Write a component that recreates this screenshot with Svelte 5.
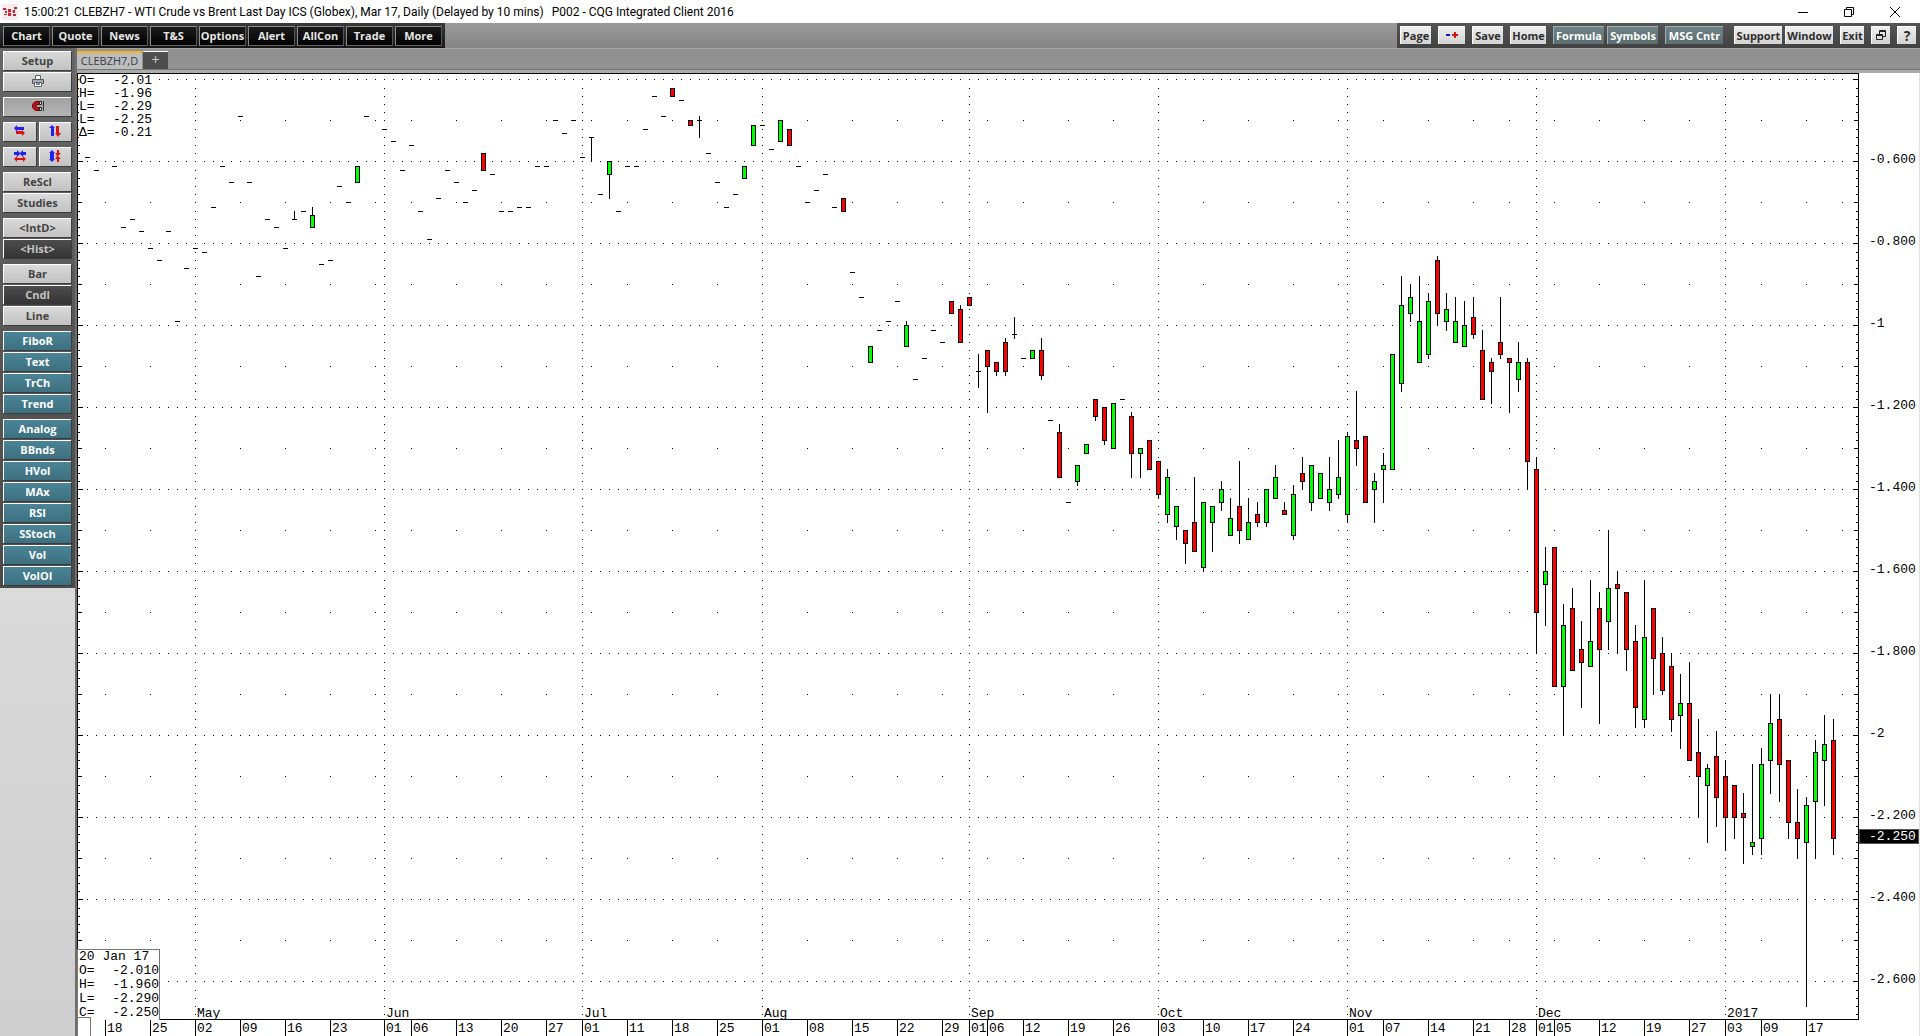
<script>
  const leftButtons = ['Chart', 'Quote', 'News', 'T&S', 'Options', 'Alert', 'AllCon', 'Trade', 'More'];
  const sideGroups = [
    { tone: 'light', items: ['ReScl', 'Studies'] },
    { tone: 'light', items: ['<IntD>', '<Hist>'], on: '<Hist>' },
    { tone: 'light', items: ['Bar', 'Cndl', 'Line'], on: 'Cndl' },
    { tone: 'teal', items: ['FiboR', 'Text', 'TrCh', 'Trend'] },
    { tone: 'teal', items: ['Analog', 'BBnds', 'HVol', 'MAx', 'RSI', 'SStoch', 'Vol', 'VolOI'] }
  ];
  const quote = [['O=', '-2.01'], ['H=', '-1.96'], ['L=', '-2.29'], ['L=', '-2.25'], ['Δ=', '-0.21']];
  const cursor = [['O=', '-2.010'], ['H=', '-1.960'], ['L=', '-2.290'], ['C=', '-2.250']];

  // Sessions in order, prices in negative cents. A lone number is a session
  // with one price; otherwise: kind (g up, r down, d doji), top, bottom, high, low.
  const raw = `59 62 - 61 76 74 77 81 84 77 99 86 81 82 71 61 65 49 65 88 74 76 81 d,74,74,72,74 72
g,73,76,71,76 85 84 66 70 g,61,65 49 - 52 55 62 56 72 79 69 62 65 70 67 r,58,62 63 72 72 71 71 61 61 50 53 50
59 d,54,54,54,60 68 g,60,63,60,69 72 61 61 52 44 49 r,42,44 45 r,50,51 d,50,50,49,54 58 65 71 68 g,61,64 g,51,56
51 57 g,50,55 r,52,56 61 70 67 63 71 r,69,72 87 93 g,105,109 101 99 94 g,100,105,99,105 113 108 101 104 r,94,97
r,96,104,95,104 r,93,95 d,111,111,107,115 r,106,110,106,121 r,109,111,109,112 r,104,111,103,112 d,102,102,98,103
108 g,106,108 r,106,112,103,113 123 r,126,137,124,137 143 g,134,138,134,139 g,129,131 r,118,122,118,123
r,120,128,120,129 g,119,130 118 r,122,131,121,137 g,130,131,130,137 r,128,135 r,133,141,133,142 g,137,146,135,148
g,144,149,144,152 r,150,153,150,158 r,148,155,137,155 g,143,159,143,160 g,144,148,144,155 g,140,143,138,145
g,147,151,142,151 r,144,150,133,153 g,148,152,142,152 r,146,148,143,149 g,140,148,140,149 g,137,142,134,142
r,145,146,143,146 g,141,151,139,152 r,136,138,132,140 g,134,143,134,145 g,136,142 g,140,143,132,145 g,137,141,128,142
g,127,146,126,148 r,128,130,116,134 r,127,143 g,138,140,136,148 g,134,135,131,143 g,107,135 g,95,114,88,116
g,93,97,90,99 g,99,109,88,109 g,94,107,92,108 r,84,97,83,100 g,96,99,92,101 g,99,104,93,104 g,100,105,94,105
r,98,102,93,103 r,106,118,101,118 r,109,111,108,119 r,104,107,93,108 r,108,109,108,121 g,109,113,104,116
r,109,133,108,140 r,135,170,132,180 g,160,163,154,173 r,154,188 g,173,188,168,200 r,169,184,164,184
r,179,182,172,193 g,177,183,162,183 r,169,179,165,197 g,164,172,150,179 r,163,164,160,180 r,165,179,165,184
r,177,193,173,198 g,176,196,162,198 r,169,181,169,190 r,180,189,176,190 r,183,196,180,199 g,192,195,185,203
r,192,206,182,206 r,204,210,196,220 g,208,212,207,226 r,205,215,199,222 r,210,220,206,228 r,212,220,212,225
r,219,220,214,231 g,226,227,207,229 g,207,225,203,229 g,197,206,190,214 r,196,207,190,216 r,206,221,206,225
r,221,225,213,230 g,217,226,215,266 g,204,216,201,230 g,202,206,195,217 r,201,225,196,229`;

  const bars = raw.split(/\s+/).map((s, i) => {
    if (s === '-') return null;
    const p = s.split(',');
    if (p.length === 1) return { i, kind: 'd', top: +s, bottom: +s, high: +s, low: +s };
    const [kind, top, bottom, high = top, low = bottom] = p;
    return { i, kind, top: +top, bottom: +bottom, high: +high, low: +low };
  }).filter(Boolean);

  const months = [[12, 'May'], [33, 'Jun'], [55, 'Jul'], [75, 'Aug'], [98, 'Sep'], [119, 'Oct'], [140, 'Nov'], [161, 'Dec'], [182, '2017']];
  const days = [[2, '18'], [7, '25'], [12, '02'], [17, '09'], [22, '16'], [27, '23'], [33, '01'], [36, '06'], [41, '13'], [46, '20'], [51, '27'], [55, '01'], [60, '11'], [65, '18'], [70, '25'], [75, '01'], [80, '08'], [85, '15'], [90, '22'], [95, '29'], [98, '01'], [100, '06'], [104, '12'], [109, '19'], [114, '26'], [119, '03'], [124, '10'], [129, '17'], [134, '24'], [140, '01'], [144, '07'], [149, '14'], [154, '21'], [158, '28'], [161, '01'], [163, '05'], [168, '12'], [173, '19'], [178, '27'], [182, '03'], [186, '09'], [191, '17']];
  const weeks = [2, 7, 17, 22, 27, 32, 36, 41, 46, 51, 56, 60, 65, 70, 80, 85, 90, 95, 100, 104, 109, 114, 124, 129, 134, 139, 144, 149, 154, 158, 163, 168, 173, 178, 186, 191, 195];
  const SLOTS = 196;

  let width = $state(1842);
  let height = $state(963);

  const axisX = $derived(width - 61);
  const axisY = $derived(height - 17);
  const step = $derived(Math.max(2, Math.floor(axisX / 197)));
  const unit = $derived(Math.max(1, Math.round(axisY / 23.07) / 10));

  const x = (i) => 10 + i * step;
  const y = (n) => Math.ceil(6 + (n - 40) * unit - 0.01);
  const priceLabel = (n) => (n % 100 ? (-n / 100).toFixed(3) : String(-n / 100));

  const ticks = $derived(Array.from({ length: 115 }, (_, k) => 40 + k * 2).filter((n) => y(n) < axisY));
  const dots = $derived.by(() => {
    let d = '';
    const dot = (i, n) => { d += `M${x(i)} ${y(n)}h1v1h-1z`; };
    for (const n of ticks) {
      if (n % 20 === 0) for (let i = 0; i < SLOTS; i++) dot(i, n);
      else if (n % 10 === 0) for (const w of weeks) dot(w, n);
      for (const [m] of months) if (n > 40) dot(m, n);
    }
    return d;
  });
  const scale = $derived(ticks.map((n) => {
    const len = n % 20 === 0 ? 5 : n % 10 === 0 ? 4 : 2;
    return `M1 ${y(n)}h${len}v1h-${len}zM${axisX} ${y(n)}h-${len}v1h${len}z`;
  }).join(''));
</script>

<div class="app">
  <header class="title">
    <svg class="logo" width="16" height="16" viewBox="0 0 16 16" aria-hidden="true">
      <rect width="16" height="16" fill="#f6eeee" />
      <path fill="#c2273a" d="M1 4h3v2H1zM6 5h3v3H6zM12 3h3v2h-3zM3 7h2v2H3zM11 6h2v3h-2zM2 10h3v1H2zM6 9h3v3H6zM11 10h3v2h-3z" />
      <path fill="#e39aa2" d="M4 5h1v2H4zM13 5h1v1h-1zM6 8h3v1H6zM10 6h1v2h-1z" />
    </svg>
    <span class="clock">15:00:21</span>
    <span class="name">CLEBZH7 - WTI Crude vs Brent Last Day ICS (Globex), Mar 17, Daily (Delayed by 10 mins)</span>
    <span>P002 - CQG Integrated Client 2016</span>
    <div class="winctl">
      <button aria-label="Minimize"><svg width="12" height="12"><path d="M1 6.5h10" /></svg></button>
      <button aria-label="Restore"><svg width="12" height="12"><path d="M1.5 3.5h7v7h-7zM3.5 3V1.5h7v7H9" /></svg></button>
      <button aria-label="Close"><svg width="12" height="12"><path d="M1 1l10 10M11 1L1 11" /></svg></button>
    </div>
  </header>

  <nav class="bar">
    <div class="main">
      {#each leftButtons as b}<button class="blk">{b}</button>{/each}
    </div>
    <div class="tools">
      <button class="lt w31">Page</button>
      <button class="lt w27 far" aria-label="Zoom">
        <svg width="14" height="8"><path fill="#1414c8" d="M1 3h4v2H1z" /><path fill="#d01818" d="M7 3h6v2H7zM9 1h2v6H9z" /></svg>
      </button>
      <button class="lt w31 far">Save</button>
      <button class="lt w36 far">Home</button>
      <button class="slate w51 far">Formula</button>
      <button class="slate w51">Symbols</button>
      <button class="slate w58 far">MSG Cntr</button>
      <button class="lt w48 gap">Support</button>
      <button class="lt w48">Window</button>
      <button class="lt w24 far">Exit</button>
      <button class="lt w19 far" aria-label="Cascade">
        <svg width="10" height="10"><path fill="none" stroke="#222" d="M.5 4.5h6v5h-6zM0 5.5h7M3.5 4V.5h6v6H7M3 1.5h7" /></svg>
      </button>
      <button class="lt w19 far help">?</button>
    </div>
  </nav>

  <div class="body">
    <aside>
      <div class="panel">
        <div class="group">
          <button class="side light">Setup</button>
          <button class="side light" aria-label="Print">
            <svg width="12" height="12"><path fill="#fff" stroke="#666" d="M3.5 4V.5h5V4" /><path fill="#aaa" stroke="#555" d="M.5 4.5h11v4H.5z" /><path fill="#fff" stroke="#666" d="M2.5 7.5h7v4h-7z" /><path fill="#68c" d="M4 8h4v2H4z" /></svg>
          </button>
        </div>
        <div class="group">
          <button class="side pressed" aria-label="Snap">
            <svg width="12" height="12"><path fill="#c01414" stroke="#600" d="M8.5 1.5H5a4.5 4.5 0 0 0 0 9h3.5v-3H5.5a1.5 1.5 0 0 1 0-3h3z" /><path fill="#ddd" stroke="#222" d="M7.5 1.5h2v3h-2zM7.5 7.5h2v3h-2z" /><path stroke="#333" d="M11.5 1v10" /></svg>
          </button>
        </div>
        <div class="group">
          <div class="pair">
            <button class="side light" aria-label="Scroll left and right">
              <svg width="12" height="12"><path fill="#22e" d="M0 3l3-3v2h7v3H3v2z" /><path fill="#d11" d="M11 8L8 5v1H2v3h6v2z" /></svg>
            </button>
            <button class="side light" aria-label="Scroll up and down">
              <svg width="12" height="12"><path fill="#22e" d="M3 0l3 3H5v8H2V3H0z" /><path fill="#d11" d="M9 12l3-4h-2V1H7v7H6z" /></svg>
            </button>
          </div>
        </div>
        <div class="group">
          <div class="pair">
            <button class="side light" aria-label="Compress bars">
              <svg width="12" height="12"><path fill="#22e" d="M0 2h3V0l3 3 3-3v2h3v3H9v2L6 4 3 7V5H0z" /><path fill="#d11" d="M0 9l3-3v2h6V6l3 3-3 3v-2H3v2z" /></svg>
            </button>
            <button class="side light" aria-label="Compress prices">
              <svg width="12" height="12"><path fill="#22e" d="M3 0l3 3H5v6h1l-3 3-3-3h1V3H0z" /><path fill="#d11" d="M8 0h2v3h2l-3 3 3 3h-2v3H8V9H6l2-3-2-3h2z" /></svg>
            </button>
          </div>
        </div>
        {#each sideGroups as g}
          <div class="group">
            {#each g.items as t}
              <button class="side {g.on === t ? 'dark' : g.tone}">{t}</button>
            {/each}
          </div>
        {/each}
      </div>
    </aside>

    <main>
      <div class="tabs">
        <button class="tab">CLEBZH7,D</button>
        <button class="tab add">+</button>
      </div>
      <div class="chart" bind:clientWidth={width} bind:clientHeight={height}>
        <svg class="plot" width="100%" height="100%" shape-rendering="crispEdges" role="img" aria-label="Daily candles of CLEBZH7">
          <path class="ink" d={dots} />
          <path class="ink" d={`${scale}M0 0h${axisX + 1}v1H0zM0 0h1v${axisY}H0zM${axisX} 0h1v${axisY + 1}h-1zM0 ${axisY}h${axisX}v1H0z`} />
          {#each bars as b}
            {#if b.high !== b.low}
              <rect class="ink" x={x(b.i)} y={y(b.high)} width="1" height={y(b.low) - y(b.high) + 1} />
            {/if}
            <rect class="ink" x={x(b.i) - 2} y={y(b.top)} width="5" height={y(b.bottom) - y(b.top) + 1} />
            {#if b.kind !== 'd'}
              <rect class={b.kind} x={x(b.i) - 1} y={y(b.top) + 1} width="3" height={y(b.bottom) - y(b.top) - 1} />
            {/if}
          {/each}
          {#each days as [i, t]}
            <rect class="ink" x={x(i)} y={axisY} width="1" height="17" />
            <text x={x(i) + 2} y={axisY + 13}>{t}</text>
          {/each}
          {#each months as [i, t]}<text x={x(i) + 2} y={axisY - 2}>{t}</text>{/each}
          {#each ticks.filter((n) => n % 20 === 0 && n > 40) as n}
            <text x={axisX + 11} y={y(n) + 2}>{priceLabel(n)}</text>
          {/each}
          <rect class="last" x={axisX + 1} y={y(225) - 9} width="59" height="14" />
          <text class="inv" x={axisX + 11} y={y(225) + 2}>-2.250</text>
        </svg>
        <div class="quote">
          {#each quote as [k, v]}<div class="row"><span>{k}</span><span>{v}</span></div>{/each}
        </div>
        <div class="cursor">
          <div class="row">20 Jan 17</div>
          {#each cursor as [k, v]}<div class="row"><span>{k}</span><span>{v}</span></div>{/each}
        </div>
        <div class="grip"></div>
      </div>
    </main>
  </div>
</div>

<style>
  :global(body) { margin: 0; }
  .app { display: flex; flex-direction: column; height: 100vh; min-height: 640px; overflow: hidden; background: #fff; font-family: 'Open Sans', 'Noto Sans', sans-serif; }
  button { font: inherit; padding: 0; border: 0; margin: 0; box-sizing: border-box; display: flex; align-items: center; justify-content: center; white-space: nowrap; }
  .title { display: flex; align-items: center; height: 23px; flex: none; padding-left: 2px; box-sizing: border-box; font: 12px/22px Roboto, sans-serif; color: #000; white-space: nowrap; }
  .clock { margin-left: 6px; width: 50px; }
  .name { margin-right: 8px; }
  .winctl { margin-left: auto; display: flex; }
  .winctl button { width: 46px; height: 20px; background: none; }
  .winctl button:last-child { margin-right: 2px; }
  .winctl path { fill: none; stroke: #000; }

  .bar { display: flex; justify-content: space-between; height: 25px; flex: none; background: linear-gradient(#9a9a9a, #858585); font-weight: 700; font-size: 11px; }
  .bar button { padding-bottom: 1px; }
  .main { display: flex; gap: 2px; padding: 3px 3px 2px; background: linear-gradient(#3a3a3a, #161616); }
  .blk { width: 47px; background: linear-gradient(#1c1c1c, #000); color: #e6e6e6; border: 1px solid #8a8a8a; border-right-color: #555; border-bottom-color: #666; }
  .tools { display: flex; padding: 3px 4px 4px 3px; background: linear-gradient(#555, #414141); gap: 3px; }
  .tools button { border-left: 1px solid #fff; border-top: 1px solid #fff; }
  .tools .lt { background: linear-gradient(#efefef, #d2d2d2); color: #2e2e2e; }
  .tools .slate { background: linear-gradient(#6f8386, #5a6c70); color: #fff; border-color: #9fb0b2; }
  .tools .far { margin-left: 4px; }
  .tools .gap { margin-left: 8px; }
  .tools .help { font-size: 14px; }
  .w19 { width: 19px; } .w24 { width: 24px; } .w27 { width: 27px; } .w31 { width: 31px; } .w36 { width: 36px; }
  .w48 { width: 48px; } .w51 { width: 51px; } .w58 { width: 58px; }

  .body { display: flex; flex: 1; min-height: 0; }
  aside { width: 75px; flex: none; background: linear-gradient(#dcdcdc 50%, #cecece); border-right: 2px solid #6e6e6e; box-sizing: content-box; }
  .panel { display: flex; flex-direction: column; gap: 6px; padding: 3px 4px 3px 3px; background: linear-gradient(#666, #4a4a4a); font-weight: 700; font-size: 11px; }
  .group { display: flex; flex-direction: column; gap: 2px; }
  .pair { display: flex; gap: 3px; }
  .side { height: 19px; flex: 1 0 19px; padding: 0 0 2px; border-left: 1px solid #fff; border-top: 1px solid #fff; box-shadow: 1px 1px 0 #3c3c3c; }
  .light { background: linear-gradient(#d9d9d9, #c2c2c2); color: #444; }
  .pressed { background: linear-gradient(#a2a2a2, #b4b4b4); }
  .dark { background: linear-gradient(#4c4c4c, #343434); color: #c4c4c4; }
  .teal { background: linear-gradient(#4a8496, #3d7080); color: #fff; }

  main { flex: 1; min-width: 0; display: flex; flex-direction: column; }
  .tabs { display: flex; align-items: flex-end; gap: 1px; height: 25px; flex: none; box-sizing: border-box; background: #919191; border-top: 1px solid #a5a5a5; border-bottom: 3px solid #aaa; box-shadow: inset 0 -1px #777; }
  .tab { height: 18px; margin-bottom: 1px; width: 65px; padding-bottom: 1px; background: #babebf; color: #3c3c3c; font: 11px/14px 'Open Sans', sans-serif; border-top: 2px solid #ffb21e; }
  .tab.add { width: 25px; background: #4e4e4e; color: #ccc; border-top: 1px solid #fff; font-size: 14px; }

  .chart { position: relative; flex: 1; min-height: 0; overflow: hidden; background: #fff; border-right: 1px solid #e0e0e0; }
  .plot { display: block; }
  .ink { fill: #000; }
  .g { fill: #00ff00; }
  .r { fill: #ff0000; }
  text, .quote, .cursor { font: 13px/14px 'Liberation Mono', monospace; fill: #000; color: #000; }
  .inv { fill: #fff; }
  .last { fill: #000; stroke: #555; }
  .row { display: flex; justify-content: space-between; white-space: pre; }
  .quote, .cursor { position: absolute; background: #fff; }
  .quote { left: 2px; top: 1px; width: 73px; line-height: 13px; }
  .cursor { left: 0; bottom: 16px; width: 80px; padding-left: 1px; border: 1px solid #777; border-bottom: 0; }
  .grip { position: absolute; left: 0; bottom: 0; width: 12px; height: 18px; border: 1px solid #777; border-bottom: 0; background: #fff; }
</style>
